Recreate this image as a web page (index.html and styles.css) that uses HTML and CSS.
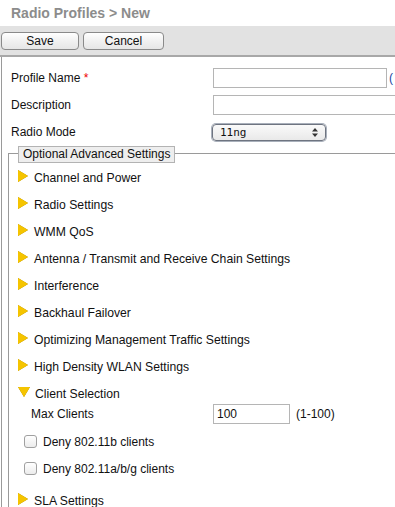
FILE: index.html
```html
<html lang="en"><head>
    <meta charset="UTF-8">
    <meta name="viewport" content="width=device-width, initial-scale=1.0">
    <title>Radio Profiles</title>
    <link rel="stylesheet" href="styles.css">
</head>
<body>
    <div class="page-title">Radio Profiles &gt; New</div>

    <div class="toolbar">
        <button class="tool-btn save-btn">Save</button>
        <button class="tool-btn cancel-btn">Cancel</button>
    </div>

    <div class="content">
        <div class="form-row">
            <label class="form-label">Profile Name <span class="required">*</span></label>
            <input type="text" class="text-field name-field">
            <span class="hint hint-cut">(</span>
        </div>
        <div class="form-row">
            <label class="form-label">Description</label>
            <input type="text" class="text-field desc-field">
        </div>
        <div class="form-row">
            <label class="form-label">Radio Mode</label>
            <div class="select-box">
                <span class="select-value">11ng</span>
                <svg class="select-arrows" width="6" height="9" viewBox="0 0 6 9">
                    <path d="M3 0 L6 3.5 H0 Z M0 5.5 H6 L3 9 Z" fill="#333"/>
                </svg>
            </div>
        </div>

        <div class="advanced">
            <div class="legend">Optional Advanced Settings</div>

            <div class="section"><span class="arrow-right"></span>Channel and Power</div>
            <div class="section"><span class="arrow-right"></span>Radio Settings</div>
            <div class="section"><span class="arrow-right"></span>WMM QoS</div>
            <div class="section"><span class="arrow-right"></span>Antenna / Transmit and Receive Chain Settings</div>
            <div class="section"><span class="arrow-right"></span>Interference</div>
            <div class="section"><span class="arrow-right"></span>Backhaul Failover</div>
            <div class="section"><span class="arrow-right"></span>Optimizing Management Traffic Settings</div>
            <div class="section"><span class="arrow-right"></span>High Density WLAN Settings</div>
            <div class="section"><span class="arrow-down"></span>Client Selection</div>

            <div class="sub-row">
                <label class="sub-label">Max Clients</label>
                <input type="text" class="text-field max-field" value="100">
                <span class="hint">(1-100)</span>
            </div>
            <div class="check-row">
                <span class="check-box"></span>Deny 802.11b clients
            </div>
            <div class="check-row">
                <span class="check-box"></span>Deny 802.11a/b/g clients
            </div>

            <div class="section last"><span class="arrow-right"></span>SLA Settings</div>
        </div>
    </div>
</body></html>
```

FILE: styles.css
```css
:root {
    --text-color: #111;
    --line-color: #9a9a9a;
    --bar-bg: #e2e2e2;
    --arrow-color: #f5c400;
}

body {
    margin: 0;
    font-family: 'Liberation Sans', Arial, sans-serif;
    font-size: 12px;
    color: var(--text-color);
    background: #fff;
    overflow: hidden;
}

.page-title {
    height: 26px;
    padding-left: 11px;
    font-size: 14px;
    font-weight: bold;
    color: #8c8c8c;
    line-height: 26px;
}

.toolbar {
    background: var(--bar-bg);
    border-bottom: 2px solid #a8a8a8;
    height: 31px;
    display: flex;
    align-items: center;
    gap: 4px;
    padding-left: 1px;
    padding-top: 1px;
    box-sizing: border-box;
}

.tool-btn {
    height: 18px;
    border: 1px solid #8a8a8a;
    border-radius: 4px;
    background: linear-gradient(#ffffff, #f1f1f1 50%, #e6e6e6);
    font-family: 'Liberation Sans', Arial, sans-serif;
    font-size: 12px;
    color: #111;
    padding: 0;
}

.save-btn {
    width: 78px;
}

.cancel-btn {
    width: 81px;
}

.content {
    border-left: 1px solid var(--line-color);
    margin-left: 1px;
    padding-top: 7px;
    padding-left: 9px;
    min-height: 460px;
}

.form-row {
    height: 27px;
    display: flex;
    align-items: center;
}

.form-label {
    width: 202px;
    flex-shrink: 0;
}

.required {
    color: #e00;
}

.text-field {
    height: 20px;
    border: 1px solid #b5b5b5;
    box-sizing: border-box;
    font-family: 'Liberation Sans', Arial, sans-serif;
    font-size: 12px;
    padding: 0 3px;
    color: #111;
}

.name-field {
    width: 174px;
}

.desc-field {
    width: 200px;
    flex-shrink: 0;
}

.hint {
    margin-left: 6px;
}

.hint-cut {
    margin-left: 2px;
    color: #1a3fa0;
}

.select-box {
    width: 114px;
    height: 17px;
    margin-left: -1px;
    margin-top: 2px;
    box-sizing: border-box;
    border: 1px solid #6e7480;
    border-radius: 4px;
    box-shadow: 0 0 0 1px #a9b0bb;
    background: linear-gradient(#fafafa, #e9e9e9);
    display: flex;
    align-items: center;
    justify-content: space-between;
    padding: 0 7px 0 7px;
}

.select-value {
    font-family: 'DejaVu Sans Mono', 'Liberation Mono', monospace;
    font-size: 11px;
}

.advanced {
    margin-top: 8px;
    margin-left: -3px;
    border-left: 1px solid var(--line-color);
    border-top: 1px solid var(--line-color);
    position: relative;
    padding-top: 10px;
}

.legend {
    position: absolute;
    top: -8px;
    left: 9px;
    height: 15px;
    line-height: 15px;
    padding: 0 4px;
    background: #eeeeee;
    border: 1px solid #b3b3b3;
}

.section {
    height: 27px;
    display: flex;
    align-items: center;
    padding-left: 9px;
    font-size: 12.2px;
}

.arrow-right {
    width: 0;
    height: 0;
    border-top: 6px solid transparent;
    border-bottom: 6px solid transparent;
    border-left: 10px solid var(--arrow-color);
    margin-right: 6px;
    margin-top: -4px;
    filter: drop-shadow(0 0 0.5px #9a7a00);
}

.arrow-down {
    width: 0;
    height: 0;
    border-left: 6px solid transparent;
    border-right: 6px solid transparent;
    border-top: 10px solid var(--arrow-color);
    margin-right: 5px;
    margin-top: -3px;
    filter: drop-shadow(0 0 0.5px #9a7a00);
}

.sub-row {
    height: 29px;
    display: flex;
    align-items: center;
    padding-left: 22px;
    margin-top: -8px;
}

.sub-label {
    width: 182px;
    flex-shrink: 0;
}

.max-field {
    width: 77px;
    height: 20px;
    padding-left: 3px;
}

.check-row {
    height: 27px;
    display: flex;
    align-items: center;
    padding-left: 15px;
}

.check-box {
    width: 11px;
    height: 11px;
    border: 1px solid #a0a0a0;
    border-radius: 3px;
    background: linear-gradient(#ffffff, #ececec);
    margin-right: 6px;
}

.section.last {
    margin-top: 5px;
}
```
